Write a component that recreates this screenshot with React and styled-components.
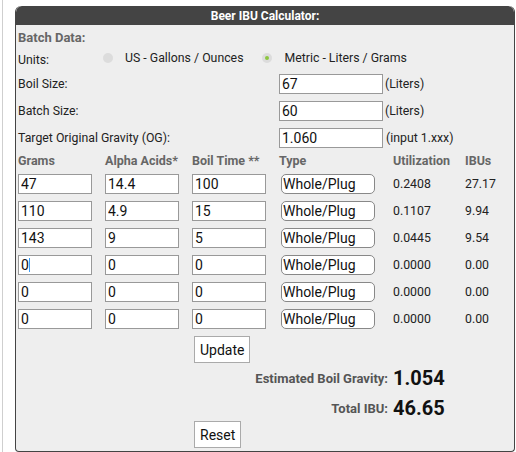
import React from "react";
import styled, { createGlobalStyle } from "styled-components";

const Global = createGlobalStyle`
  html, body { margin: 0; padding: 0; background: #fff; }
  body { font-family: Roboto, "Liberation Sans", Arial, sans-serif; }
`;

const Page = styled.div`
  margin-left: 2px;
  border-left: 1px solid #cfcfcf;
  height: 452px;
  padding: 6px 0 0 12px;
  box-sizing: border-box;
  overflow: hidden;
`;

const Panel = styled.div`
  width: 500px;
  height: 446px;
  box-sizing: border-box;
  background: #eeeeee;
  border: 1px solid #444;
  border-top: none;
  border-radius: 6px 6px 4px 4px;
  overflow: hidden;
`;

const Header = styled.div`
  height: 19px;
  background: #444;
  color: #fff;
  font-weight: 700;
  font-size: 12px;
  display: flex;
  align-items: center;
  justify-content: center;
  border-radius: 6px 6px 0 0;
`;

const Body = styled.div`
  display: grid;
  grid-template-columns: 87px 87px 87px 114px 72px 1fr;
  grid-template-rows: 24px 21px 27px 27px 27px 19px repeat(6, 27px) 34px 24px 6px 24px 30px;
  padding: 0 0 0 2px;
  align-items: center;
  font-size: 12px;
  color: #222;
`;

const Cell = styled.div`
  grid-column: ${(p) => p.$col || "auto"};
  grid-row: ${(p) => p.$row || "auto"};
  display: flex;
  align-items: center;
  align-self: ${(p) => p.$self || "center"};
  justify-content: ${(p) => (p.$right ? "flex-end" : "flex-start")};
  padding-right: ${(p) => (p.$right ? "5px" : "0")};
  gap: ${(p) => p.$gap || 0}px;
  white-space: nowrap;
`;

const SectionTitle = styled.span`
  font-weight: 700;
  color: #666;
  font-size: 13px;
`;

const ColHead = styled.span`
  font-weight: 700;
  color: #666;
  font-size: 12.5px;
`;

const Label = styled.span`
  color: #222;
  font-size: 12.3px;
`;

const RadioGroup = styled.div`
  display: flex;
  align-items: center;
  padding-bottom: 4px;
  margin-left: -2px;
`;

const RadioItem = styled.label`
  display: flex;
  align-items: center;
  gap: 12px;
  margin-right: 19px;
  font-size: 12.3px;
  color: #222;
`;

const RadioDot = styled.span`
  width: 10px;
  height: 10px;
  border-radius: 50%;
  background: #dcdcdc;
  display: flex;
  align-items: center;
  justify-content: center;
  &::after {
    content: "";
    width: 4px;
    height: 4px;
    border-radius: 50%;
    background: ${(p) => (p.$checked ? "#8cc63f" : "transparent")};
  }
`;

const TextInput = styled.input`
  box-sizing: border-box;
  width: ${(p) => p.$w || 74}px;
  height: 20px;
  border: 1px solid #999;
  background: #fff;
  padding: 0 2px;
  font-family: Roboto, "Liberation Sans", Arial, sans-serif;
  font-size: 14px;
  color: #111;
  outline: none;
  margin: 0;
`;

const CaretWrap = styled.div`
  position: relative;
  display: inline-block;
`;

const Caret = styled.span`
  position: absolute;
  left: 11px;
  top: 3px;
  width: 1px;
  height: 14px;
  background: #3d9cf5;
`;

const Select = styled.select`
  box-sizing: border-box;
  appearance: none;
  -webkit-appearance: none;
  width: 94px;
  height: 20px;
  margin-left: 2px;
  border: 1px solid #888;
  border-radius: 5px;
  background: #fff;
  padding: 0 1px;
  font-family: Roboto, "Liberation Sans", Arial, sans-serif;
  font-size: 14px;
  color: #111;
  outline: none;
`;

const Unit = styled.span`
  font-size: 12.3px;
  color: #222;
`;

const Num = styled.span`
  font-size: 12.3px;
  color: #222;
`;

const Button = styled.button`
  box-sizing: border-box;
  height: 27px;
  margin-left: 2px;
  padding: 0 5px;
  background: #fff;
  border: 1px solid #aaa;
  border-radius: 0;
  font-family: Roboto, "Liberation Sans", Arial, sans-serif;
  font-size: 14px;
  color: #111;
`;

const ResultLabel = styled.span`
  font-weight: 700;
  color: #555;
  font-size: 13px;
`;

const ResultValue = styled.span`
  font-weight: 700;
  color: #111;
  font-size: 20px;
`;

const hops = [
  { g: "47", a: "14.4", t: "100", u: "0.2408", i: "27.17" },
  { g: "110", a: "4.9", t: "15", u: "0.1107", i: "9.94" },
  { g: "143", a: "9", t: "5", u: "0.0445", i: "9.54" },
  { g: "0", a: "0", t: "0", u: "0.0000", i: "0.00", focus: true },
  { g: "0", a: "0", t: "0", u: "0.0000", i: "0.00" },
  { g: "0", a: "0", t: "0", u: "0.0000", i: "0.00" },
];

export default function App() {
  return (
    <>
      <Global />
      <Page>
        <Panel>
          <Header>Beer IBU Calculator:</Header>
          <Body>
            <Cell $col="1 / 7" $row="1">
              <SectionTitle>Batch Data:</SectionTitle>
            </Cell>

            <Cell $col="1" $row="2" $self="start" style={{ marginTop: 4 }}>
              <Label>Units:</Label>
            </Cell>
            <Cell $col="2 / 7" $row="2">
              <RadioGroup>
                <RadioItem>
                  <RadioDot />
                  US - Gallons / Ounces
                </RadioItem>
                <RadioItem>
                  <RadioDot $checked />
                  Metric - Liters / Grams
                </RadioItem>
              </RadioGroup>
            </Cell>

            <Cell $col="1 / 4" $row="3">
              <Label>Boil Size:</Label>
            </Cell>
            <Cell $col="4 / 7" $row="3" $gap={2}>
              <TextInput $w={104} defaultValue="67" />
              <Unit>(Liters)</Unit>
            </Cell>

            <Cell $col="1 / 4" $row="4">
              <Label>Batch Size:</Label>
            </Cell>
            <Cell $col="4 / 7" $row="4" $gap={2}>
              <TextInput $w={104} defaultValue="60" />
              <Unit>(Liters)</Unit>
            </Cell>

            <Cell $col="1 / 4" $row="5">
              <Label>Target Original Gravity (OG):</Label>
            </Cell>
            <Cell $col="4 / 7" $row="5" $gap={3}>
              <TextInput $w={104} defaultValue="1.060" />
              <Unit>(input 1.xxx)</Unit>
            </Cell>

            <Cell $col="1" $row="6"><ColHead>Grams</ColHead></Cell>
            <Cell $col="2" $row="6"><ColHead>Alpha Acids*</ColHead></Cell>
            <Cell $col="3" $row="6"><ColHead>Boil Time **</ColHead></Cell>
            <Cell $col="4" $row="6"><ColHead>Type</ColHead></Cell>
            <Cell $col="5" $row="6"><ColHead>Utilization</ColHead></Cell>
            <Cell $col="6" $row="6"><ColHead>IBUs</ColHead></Cell>

            {hops.map((h, idx) => {
              const row = 7 + idx;
              return (
                <React.Fragment key={idx}>
                  <Cell $col="1" $row={row}>
                    {h.focus ? (
                      <CaretWrap>
                        <TextInput defaultValue={h.g} />
                        <Caret />
                      </CaretWrap>
                    ) : (
                      <TextInput defaultValue={h.g} />
                    )}
                  </Cell>
                  <Cell $col="2" $row={row}>
                    <TextInput defaultValue={h.a} />
                  </Cell>
                  <Cell $col="3" $row={row}>
                    <TextInput defaultValue={h.t} />
                  </Cell>
                  <Cell $col="4" $row={row}>
                    <Select defaultValue="whole">
                      <option value="whole">Whole/Plug</option>
                      <option value="pellet">Pellet</option>
                    </Select>
                  </Cell>
                  <Cell $col="5" $row={row}>
                    <Num>{h.u}</Num>
                  </Cell>
                  <Cell $col="6" $row={row}>
                    <Num>{h.i}</Num>
                  </Cell>
                </React.Fragment>
              );
            })}

            <Cell $col="3" $row="13" $self="end" style={{ marginBottom: 3 }}>
              <Button>Update</Button>
            </Cell>

            <Cell $col="1 / 5" $row="14" $right>
              <ResultLabel>Estimated Boil Gravity:</ResultLabel>
            </Cell>
            <Cell $col="5 / 7" $row="14">
              <ResultValue>1.054</ResultValue>
            </Cell>

            <Cell $col="1 / 5" $row="16" $right>
              <ResultLabel>Total IBU:</ResultLabel>
            </Cell>
            <Cell $col="5 / 7" $row="16">
              <ResultValue>46.65</ResultValue>
            </Cell>

            <Cell $col="3" $row="17" $self="start" style={{ marginTop: 1 }}>
              <Button>Reset</Button>
            </Cell>
          </Body>
        </Panel>
      </Page>
    </>
  );
}
